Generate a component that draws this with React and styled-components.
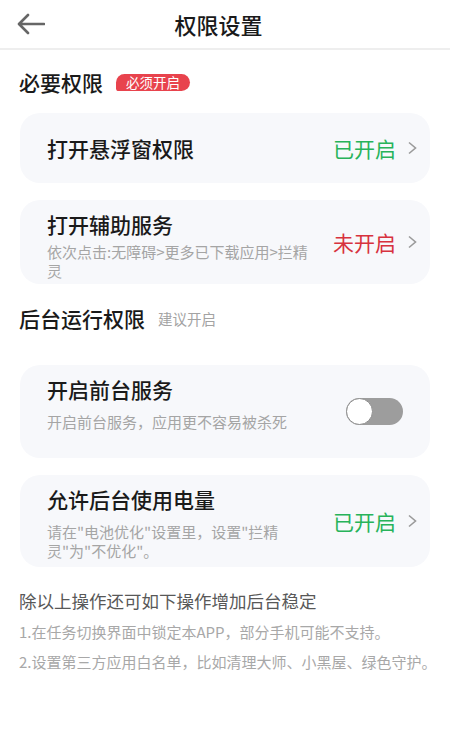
import React, { useState } from 'react'
import styled, { createGlobalStyle } from 'styled-components'

const GlobalStyle = createGlobalStyle`
  body {
    margin: 0;
    background: #ffffff;
    font-family: "Noto Sans CJK SC", "Noto Sans", sans-serif;
    color: #1c1c1c;
  }
`

const Page = styled.div`
  width: 450px;
  min-height: 750px;
  background: #fff;
`

const Header = styled.header`
  height: 48px;
  border-bottom: 2px solid #eeeeee;
  display: flex;
  align-items: center;
`

const BackButton = styled.button`
  width: 48px;
  height: 48px;
  padding: 0 0 0 17px;
  border: none;
  background: transparent;
  display: flex;
  align-items: center;
  cursor: pointer;
`

const Title = styled.h1`
  flex: 1;
  margin: 0 61px 0 0;
  text-align: center;
  font-size: 22px;
  font-weight: 500;
  line-height: 48px;
  color: #1a1a1a;
`

const Content = styled.main`
  padding: 0 20px;
`

const SectionHead = styled.div`
  display: flex;
  align-items: center;
  gap: 13px;
  height: 30px;
  margin-top: ${p => p.$top}px;
  margin-left: -1px;
`

const SectionTitle = styled.span`
  font-size: 21px;
  font-weight: 500;
  color: #1a1a1a;
`

const Badge = styled.span`
  background: #e8434d;
  color: #fff;
  font-size: 13.5px;
  line-height: 17px;
  padding: 0 10px;
  border-radius: 9px 9px 9px 3px;
`

const Hint = styled.span`
  font-size: 14.5px;
  color: #a3a3a3;
`

const Card = styled.div`
  margin-top: ${p => p.$top}px;
  height: ${p => p.$h}px;
  box-sizing: border-box;
  background: #f7f8fb;
  border-radius: 20px;
  padding: 0 12px 0 27px;
  display: flex;
  align-items: center;
  gap: 12px;
`

const Body = styled.div`
  flex: 1;
  align-self: ${p => (p.$single ? 'center' : 'flex-start')};
  padding-top: ${p => (p.$single ? 0 : 10)}px;
`

const CardTitle = styled.div`
  font-size: 21px;
  font-weight: 500;
  line-height: 28px;
  color: #1a1a1a;
`

const CardSub = styled.div`
  margin-top: ${p => p.$gap}px;
  max-width: ${p => p.$maxW}px;
  font-size: 15px;
  line-height: 19px;
  color: #a5a5a5;
`

const Status = styled.div`
  display: flex;
  align-items: center;
  gap: 11px;
  font-size: 21px;
  color: ${p => (p.$on ? '#27b35a' : '#d7323e')};
`

const Track = styled.button`
  width: 57px;
  height: 27px;
  margin-right: 15px;
  padding: 0;
  border: none;
  border-radius: 14px;
  background: ${p => (p.$on ? '#27b35a' : '#9d9d9d')};
  position: relative;
  cursor: pointer;
`

const Knob = styled.span`
  position: absolute;
  top: 0;
  left: ${p => (p.$on ? 30 : 0)}px;
  width: 27px;
  height: 27px;
  box-sizing: border-box;
  border-radius: 50%;
  background: #fff;
  border: 1.5px solid #8e8e8e;
`

const Footer = styled.div`
  margin-top: 22px;
`

const FootHead = styled.div`
  font-size: 17.5px;
  line-height: 24px;
  color: #585858;
  margin-left: -1px;
`

const FootLine = styled.div`
  font-size: 15px;
  line-height: 30px;
  color: #a8a8a8;
  margin-left: -1px;
  margin-top: ${p => p.$top || 0}px;
  white-space: nowrap;
`

function Chevron() {
  return (
    <svg width="11" height="14" viewBox="0 0 11 14">
      <path d="M2 1.5 L8.5 7 L2 12.5" fill="none" stroke="#9a9a9a" strokeWidth="1.6" />
    </svg>
  )
}

function BackArrow() {
  return (
    <svg width="28" height="22" viewBox="0 0 28 22">
      <path d="M2.5 11 H27 M11 2 L2 11 L11 20" fill="none" stroke="#666" strokeWidth="2.6" strokeLinecap="round" strokeLinejoin="round" />
    </svg>
  )
}

export default function App() {
  const [foreground, setForeground] = useState(false)

  return (
    <Page>
      <GlobalStyle />
      <Header>
        <BackButton aria-label="返回"><BackArrow /></BackButton>
        <Title>权限设置</Title>
      </Header>

      <Content>
        <SectionHead $top={17}>
          <SectionTitle>必要权限</SectionTitle>
          <Badge>必须开启</Badge>
        </SectionHead>

        <Card $top={16} $h={70}>
          <Body $single>
            <CardTitle>打开悬浮窗权限</CardTitle>
          </Body>
          <Status $on>已开启<Chevron /></Status>
        </Card>

        <Card $top={17} $h={84}>
          <Body>
            <CardTitle>打开辅助服务</CardTitle>
            <CardSub $gap={4} $maxW={266}>依次点击:无障碍&gt;更多已下载应用&gt;拦精灵</CardSub>
          </Body>
          <Status>未开启<Chevron /></Status>
        </Card>

        <SectionHead $top={19}>
          <SectionTitle>后台运行权限</SectionTitle>
          <Hint>建议开启</Hint>
        </SectionHead>

        <Card $top={32} $h={93}>
          <Body>
            <CardTitle>开启前台服务</CardTitle>
            <CardSub $gap={9}>开启前台服务，应用更不容易被杀死</CardSub>
          </Body>
          <Track $on={foreground} onClick={() => setForeground(!foreground)}>
            <Knob $on={foreground} />
          </Track>
        </Card>

        <Card $top={17} $h={92}>
          <Body>
            <CardTitle>允许后台使用电量</CardTitle>
            <CardSub $gap={9} $maxW={242}>请在"电池优化"设置里，设置"拦精灵"为"不优化"。</CardSub>
          </Body>
          <Status $on>已开启<Chevron /></Status>
        </Card>

        <Footer>
          <FootHead>除以上操作还可如下操作增加后台稳定</FootHead>
          <FootLine $top={4}>1.在任务切换界面中锁定本APP，部分手机可能不支持。</FootLine>
          <FootLine>2.设置第三方应用白名单，比如清理大师、小黑屋、绿色守护。</FootLine>
        </Footer>
      </Content>
    </Page>
  )
}
